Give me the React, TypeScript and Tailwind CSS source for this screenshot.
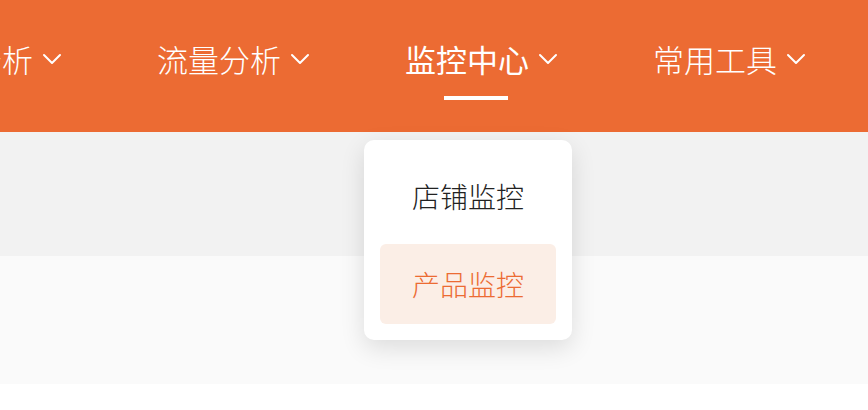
import React from 'react';

const navItems = ['数据分析', '流量分析', '监控中心', '常用工具'];

function Chevron() {
  return (
    <svg width="20" height="12" viewBox="0 0 20 12" fill="none" className="shrink-0">
      <polyline points="2,2 10,10 18,2" stroke="currentColor" strokeWidth="2" strokeLinecap="round" strokeLinejoin="round" />
    </svg>
  );
}

export default function App() {
  return (
    <div
      className="relative w-[868px] h-[410px] overflow-hidden bg-white"
      style={{ fontFamily: '"Noto Sans CJK SC", "Noto Sans", sans-serif' }}
    >
      {/* top nav */}
      <div className="h-[132px] bg-[#ec6b33] overflow-hidden">
        <div className="flex gap-[95px] ml-[-91px] pt-[38px]">
          {navItems.map((label) => {
            const active = label === '监控中心';
            return (
              <div key={label} className="flex flex-col shrink-0">
                <div className="flex items-center gap-[9px] text-white">
                  <span className={`text-[31px] leading-[42px] whitespace-nowrap ${active ? 'font-normal' : 'font-light'}`}>
                    {label}
                  </span>
                  <Chevron />
                </div>
                {active && <div className="mt-[16px] ml-[39px] w-[64px] h-[4px] bg-white" />}
              </div>
            );
          })}
        </div>
      </div>

      <div className="h-[124px] bg-[#f2f2f2]" />
      <div className="h-[128px] bg-[#fafafa]" />

      {/* dropdown */}
      <div className="absolute left-[364px] top-[140px] w-[208px] p-[16px] flex flex-col gap-[8px] bg-white rounded-[10px] shadow-[0_8px_24px_rgba(0,0,0,0.12)]">
        <div className="h-[80px] flex items-center justify-center text-[28px] font-light text-[#222]">
          店铺监控
        </div>
        <div className="h-[80px] flex items-center justify-center rounded-[6px] bg-[#fbeee6] text-[28px] font-light text-[#ec6b33]">
          产品监控
        </div>
      </div>
    </div>
  );
}
